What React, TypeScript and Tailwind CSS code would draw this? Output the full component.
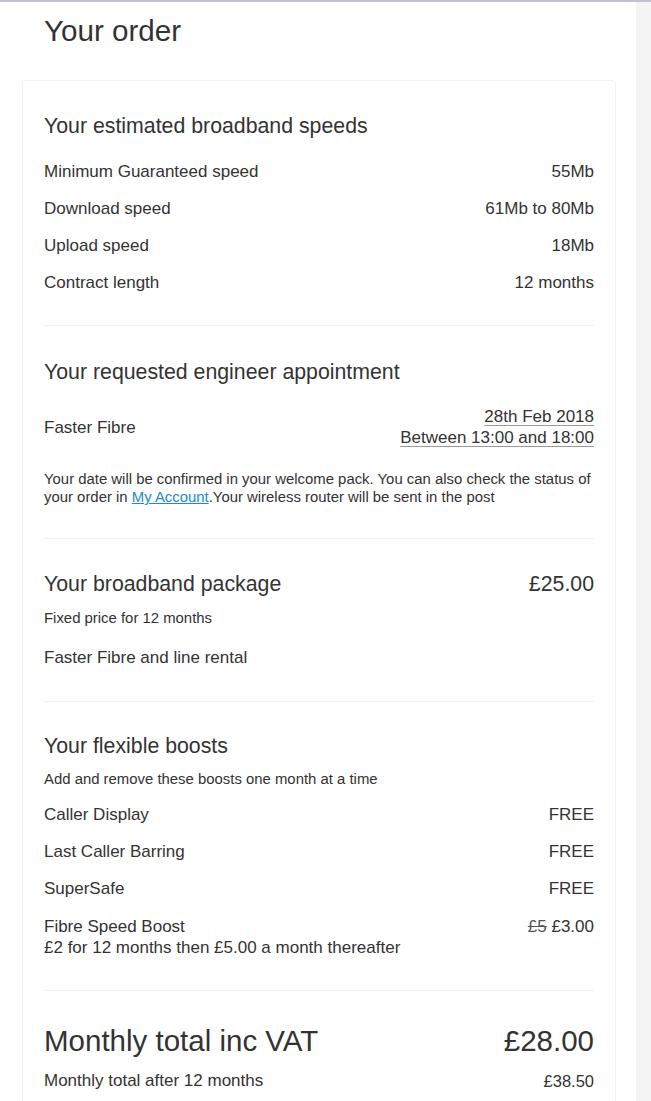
import React from "react";

// Simple label / value row used across the order summary
function Row({
    label,
    value,
    className = "",
}: {
    label: React.ReactNode;
    value: React.ReactNode;
    className?: string;
}) {
    return (
        <div className={`flex items-start justify-between py-[8px] text-[17px] leading-[21px] ${className}`}>
            <div>{label}</div>
            <div className="text-right">{value}</div>
        </div>
    );
}

function Divider() {
    return <div className="h-px bg-[#f1f1f1]" />;
}

function SectionTitle({ children }: { children: React.ReactNode }) {
    return <h2 className="text-[21.3px] leading-[28px]">{children}</h2>;
}

export default function App() {
    return (
        <div
            className="flex min-h-[1101px] border-t-2 border-[#bfc4cc] bg-white text-[#333]"
            style={{ fontFamily: '"Liberation Sans", Arial, sans-serif' }}
        >
            <main className="w-[637px] shrink-0 border-r border-[#f3f3f3] pt-[11px]">
                <h1 className="pl-[44px] text-[29.6px] leading-[36px]">Your order</h1>

                <div className="ml-[22px] mr-[20px] mt-[31px] rounded-[3px] border border-[#f2f2f2] px-[21px]">
                    {/* Speeds */}
                    <section className="pt-[31px] pb-[24px]">
                        <SectionTitle>Your estimated broadband speeds</SectionTitle>
                        <div className="mt-[13px]">
                            <Row label="Minimum Guaranteed speed" value="55Mb" />
                            <Row label="Download speed" value="61Mb to 80Mb" />
                            <Row label="Upload speed" value="18Mb" />
                            <Row label="Contract length" value="12 months" />
                        </div>
                    </section>
                    <Divider />

                    {/* Engineer appointment */}
                    <section className="pt-[32px] pb-[32px]">
                        <SectionTitle>Your requested engineer appointment</SectionTitle>
                        <div className="mt-[20px] flex items-center justify-between text-[17px] leading-[21px]">
                            <div>Faster Fibre</div>
                            <div className="text-right">
                                <div>
                                    <span className="underline decoration-[#9a9a9a] underline-offset-[3px]">
                                        28th Feb 2018
                                    </span>
                                </div>
                                <div>
                                    <span className="underline decoration-[#9a9a9a] underline-offset-[3px]">
                                        Between 13:00 and 18:00
                                    </span>
                                </div>
                            </div>
                        </div>
                        <p className="mt-[22px] text-[14.9px] leading-[18px]">
                            Your date will be confirmed in your welcome pack. You can also check the status of
                            <br />
                            your order in{" "}
                            <a href="#" className="text-[#1a8bcb] underline">
                                My Account
                            </a>
                            .Your wireless router will be sent in the post
                        </p>
                    </section>
                    <Divider />

                    {/* Package */}
                    <section className="pt-[31px] pb-[31px]">
                        <div className="flex items-start justify-between">
                            <SectionTitle>Your broadband package</SectionTitle>
                            <div className="text-[21.3px] leading-[28px]">£25.00</div>
                        </div>
                        <div className="mt-[10px] text-[14.9px] leading-[20px]">Fixed price for 12 months</div>
                        <div className="mt-[18px] text-[17px] leading-[24px]">Faster Fibre and line rental</div>
                    </section>
                    <Divider />

                    {/* Boosts */}
                    <section className="pt-[30px] pb-[24px]">
                        <SectionTitle>Your flexible boosts</SectionTitle>
                        <div className="mt-[9px] text-[14.9px] leading-[20px]">
                            Add and remove these boosts one month at a time
                        </div>
                        <div className="mt-[7px]">
                            <Row label="Caller Display" value="FREE" />
                            <Row label="Last Caller Barring" value="FREE" />
                            <Row label="SuperSafe" value="FREE" />
                            <Row
                                className="mt-[1px]"
                                label={
                                    <>
                                        Fibre Speed Boost
                                        <br />
                                        £2 for 12 months then £5.00 a month thereafter
                                    </>
                                }
                                value={
                                    <>
                                        <span className="text-[#555] line-through">£5</span> £3.00
                                    </>
                                }
                            />
                        </div>
                    </section>
                    <Divider />

                    {/* Totals */}
                    <section className="pt-[32px] pb-[20px]">
                        <div className="flex items-center justify-between text-[29.5px] leading-[36px]">
                            <div>Monthly total inc VAT</div>
                            <div>£28.00</div>
                        </div>
                        <div className="mt-[10px] flex items-center justify-between leading-[24px]">
                            <div className="text-[17px]">Monthly total after 12 months</div>
                            <div className="text-[16.5px]">£38.50</div>
                        </div>
                    </section>
                </div>
            </main>
            <div className="flex-1 bg-[#f4f4f4]" />
        </div>
    );
}
